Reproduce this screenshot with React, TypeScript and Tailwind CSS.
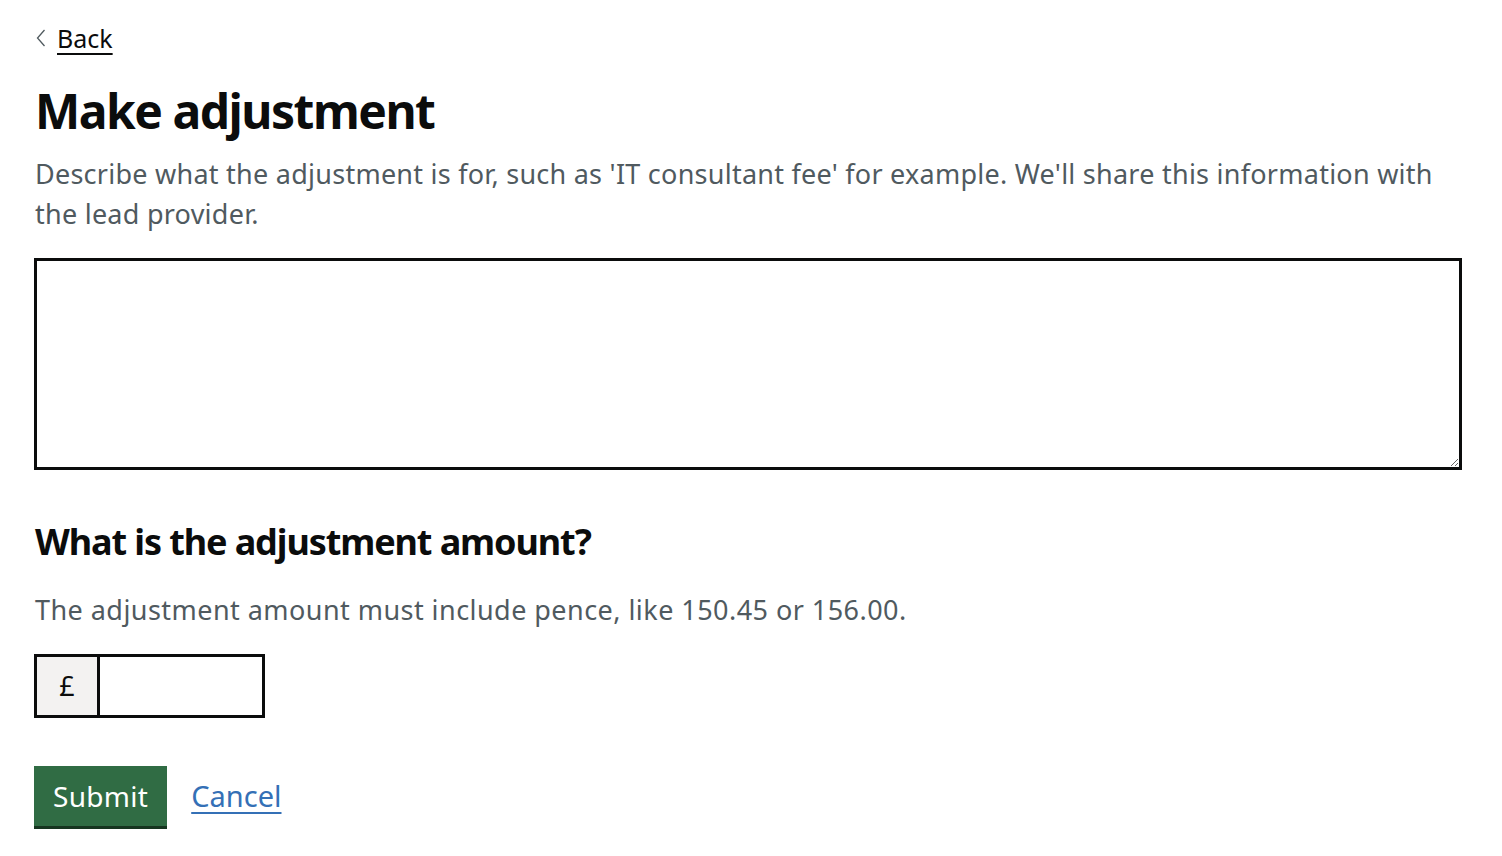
import React from "react";

export default function App() {
  const font = { fontFamily: '"Noto Sans", "Liberation Sans", sans-serif' };
  return (
    <div className="min-h-screen bg-white text-[#0b0c0c]" style={font}>
      <div className="px-[35px] pt-[22px]">
        <a href="#" className="inline-flex items-center gap-[11px] text-[25px] leading-[32px] text-[#0b0c0c] underline underline-offset-[5px] decoration-[2px]">
          <svg width="11" height="18" viewBox="0 0 11 18" className="shrink-0">
            <path d="M9.5 1 L2.5 9 L9.5 17" fill="none" stroke="#505a5f" strokeWidth="1.3" />
          </svg>
          <span>Back</span>
        </a>
        <h1 className="mt-[29px] text-[48px] leading-[56px] font-bold tracking-[-1.5px]">Make adjustment</h1>
        <p className="mt-[15px] text-[27px] leading-[40px] tracking-[0.25px] text-[#505a5f]">
          Describe what the adjustment is for, such as 'IT consultant fee' for example. We'll share this information with the lead provider.
        </p>
        <textarea className="mt-[24px] block w-[1428px] h-[212px] border-[3px] border-[#0b0c0c] -ml-px" />
        <h2 className="mt-[50px] text-[36px] leading-[44px] font-bold tracking-[-1.1px]">What is the adjustment amount?</h2>
        <p className="mt-[26px] text-[27px] leading-[40px] tracking-[0.45px] text-[#505a5f]">The adjustment amount must include pence, like 150.45 or 156.00.</p>
        <div className="mt-[24px] -ml-px flex h-[64px] w-[231px] border-[3px] border-[#0b0c0c]">
          <div className="flex w-[63px] items-center justify-center bg-[#f3f2f1] border-r-[3px] border-[#0b0c0c] text-[27px]">£</div>
          <input className="flex-1 min-w-0 outline-none" />
        </div>
        <div className="mt-[48px] flex items-start gap-[24px]">
          <button className="-ml-px h-[60px] px-[19px] bg-[#306c44] text-white text-[28px] leading-[1] tracking-[0.3px] shadow-[0_3px_0_#163520]">Submit</button>
          <a href="#" className="mt-[12px] text-[29px] leading-[36px] text-[#3470b6] underline underline-offset-[5px] decoration-[2px]">Cancel</a>
        </div>
      </div>
    </div>
  );
}
